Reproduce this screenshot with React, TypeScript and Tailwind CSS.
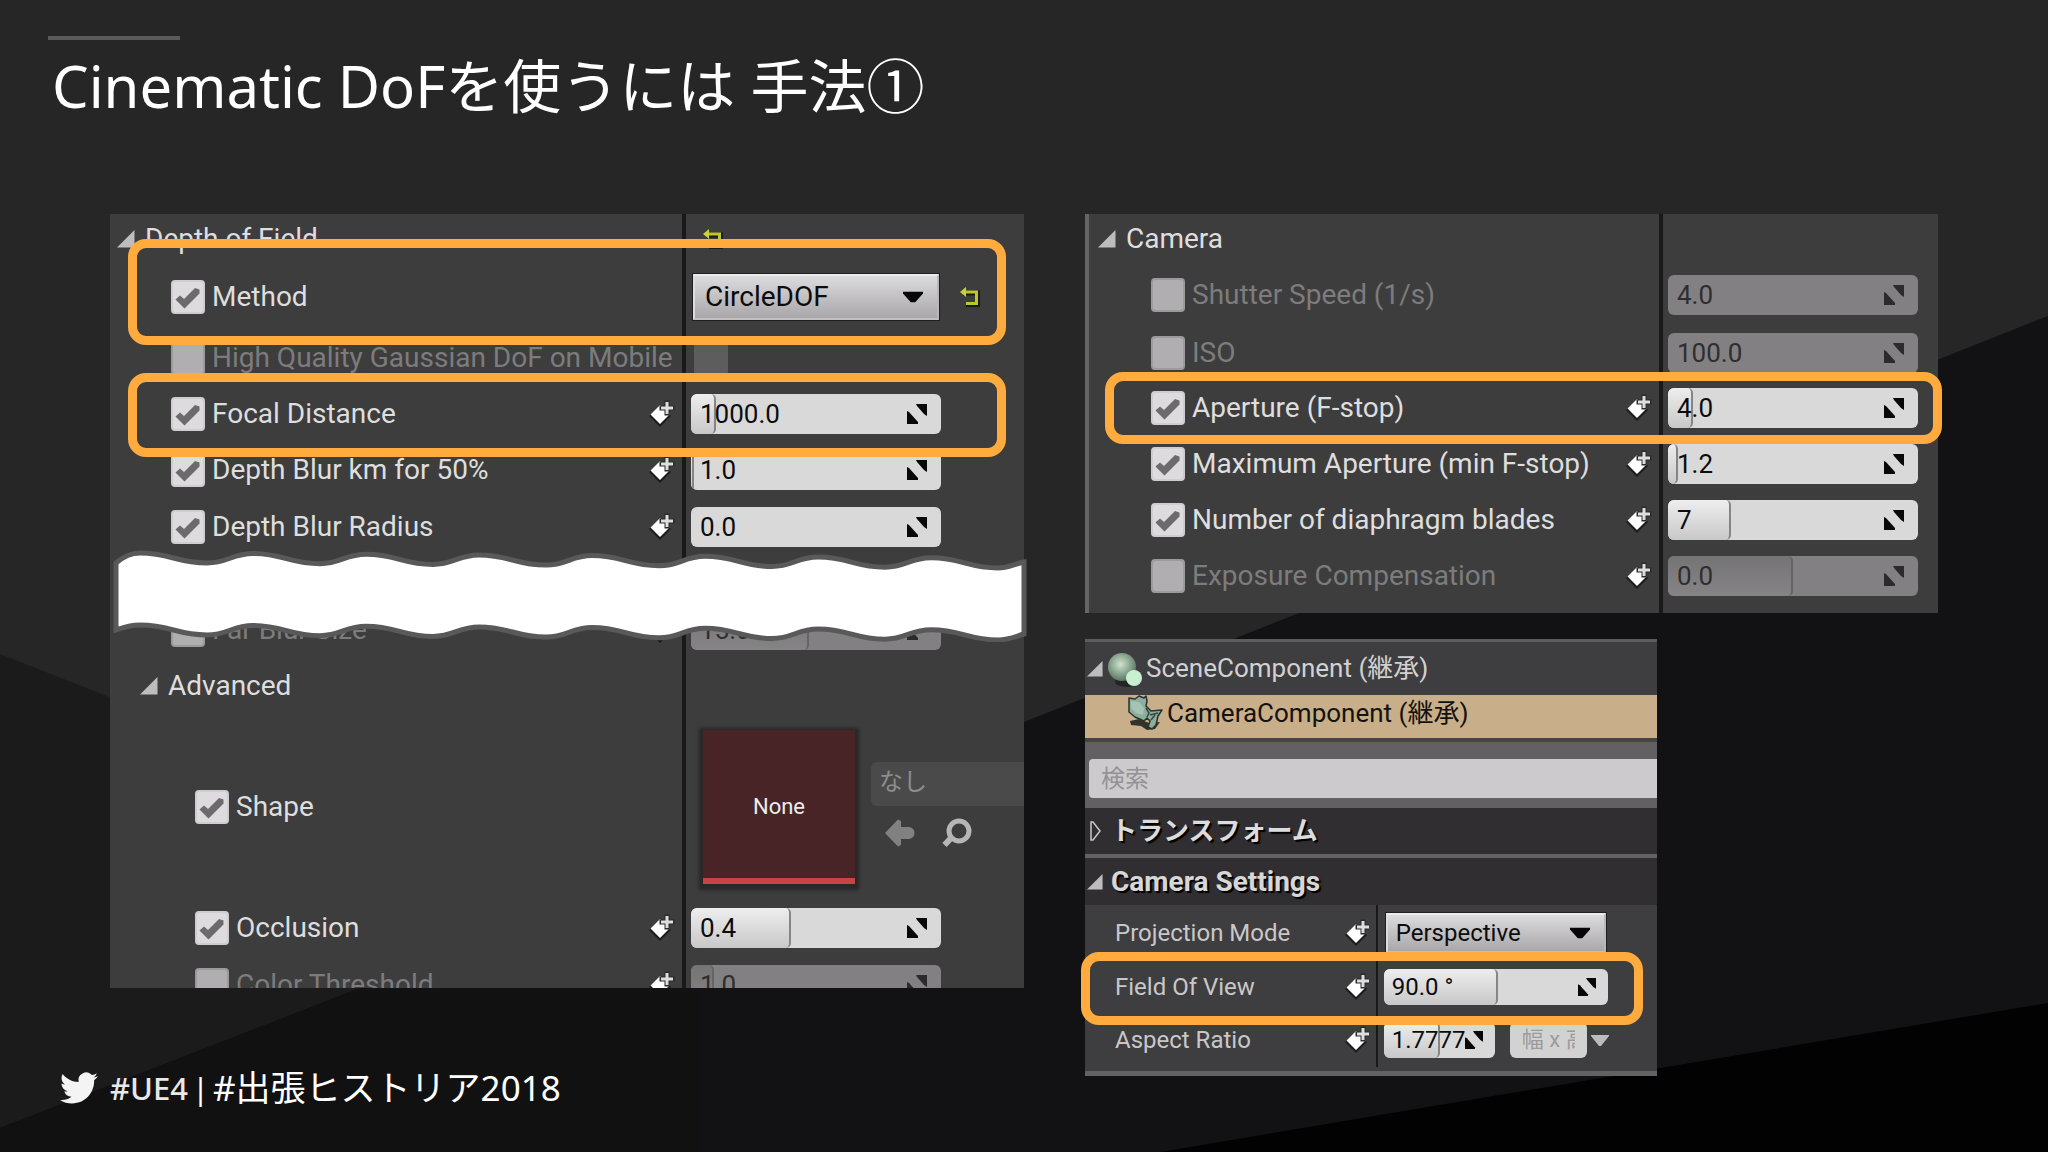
import React, { useId, useState } from "react";
import type { ReactNode } from "react";

const cols = "grid w-full grid-cols-[572fr_4px_338fr] items-stretch";
const camCols = "grid w-full grid-cols-[570fr_4px_275fr] items-stretch";
const compCols = "grid w-full grid-cols-[291fr_2px_279fr] items-stretch";

function Backdrop() {
  return (
    <svg
      className="absolute inset-0 h-full w-full"
      viewBox="0 0 2048 1152"
      preserveAspectRatio="none"
      aria-hidden="true"
    >
      <rect width="2048" height="1152" fill="#262626" />
      <polygon points="0,654 600,890 600,1152 0,1152" fill="#1b1b1b" />
      <polygon points="0,1128 350,992 1024,722 2048,316 2048,1152 0,1152" fill="#121113" />
      <polygon points="0,1128 350,992 700,992 700,1152 0,1152" fill="#111111" />
      <polygon points="1160,1152 2048,1003 2048,1152" fill="#020202" />
    </svg>
  );
}

function KeyIcon({ small = false }: { small?: boolean }) {
  return (
    <svg
      className={small ? "h-7 w-6 shrink-0" : "h-7 w-7 shrink-0"}
      viewBox={small ? "2 0 24 28" : "0 0 28 28"}
      aria-hidden="true"
    >
      <path d="M13 4.5 L24 16 L13 27 L2 16 Z" fill="#1c1c1c" />
      <path d="M13 5 L22.500 14.500 L13 24 L3.500 14.500 Z" fill="#ffffff" />
      <path d="M17.500 0.500h5v5h5v5h-5v5h-5v-5h-5v-5h5z" fill="#2a2a2a" />
      <path d="M18.500 2h3v4.500h4.500v3h-4.500v4.500h-3v-4.500h-4.500v-3h4.500z" fill="#dedede" />
    </svg>
  );
}

function ExpandIcon({ dim = false, small = false }: { dim?: boolean; small?: boolean }) {
  return (
    <svg
      className={small ? "h-[18px] w-[18px] shrink-0" : "h-5 w-5 shrink-0"}
      viewBox="0 0 20 20"
      fill={dim ? "#2c2b2c" : "#080808"}
      aria-hidden="true"
    >
      <path d="M9 0H20V12L17 10L10 2Z" />
      <path d="M0 7L2 8L11 18V20H0Z" />
    </svg>
  );
}

function ResetIcon() {
  return (
    <svg className="h-5 w-5" viewBox="0 0 20 20" aria-hidden="true">
      <path d="M3 6H17.500V18.500H6" fill="none" stroke="#1b1b12" strokeWidth="5" />
      <path d="M3 5H16.500V16.500H6" fill="none" stroke="#b9c92c" strokeWidth="3" />
      <path d="M0 5L6 0V10Z" fill="#c6d636" />
    </svg>
  );
}

function OpenArrow({ small = false }: { small?: boolean }) {
  return (
    <svg
      className={small ? "h-4 w-4 shrink-0" : "h-[18px] w-[18px] shrink-0"}
      viewBox="0 0 18 18"
      aria-hidden="true"
    >
      <path d="M17.500 0V17.500H0Z" fill="#bdbdbd" />
    </svg>
  );
}

function Tick({
  id,
  checked = false,
  faint = false,
  label,
}: {
  id?: string;
  checked?: boolean;
  faint?: boolean;
  label?: string;
}) {
  const [on, setOn] = useState(checked);
  const tone = faint
    ? "bg-[#5d5d5d]"
    : on
      ? "border-2 border-[#cfcdcf] bg-[#dddbdd]"
      : "border-2 border-[#9c9b9c] bg-[#b0aeb0]";
  return (
    <span className="relative inline-flex h-[34px] w-[34px] shrink-0">
      <input
        id={id}
        type="checkbox"
        aria-label={label}
        checked={on}
        onChange={(e) => setOn(e.target.checked)}
        className={`h-full w-full appearance-none rounded-[4px] ${tone}`}
      />
      {on && (
        <svg
          className="pointer-events-none absolute inset-0 h-full w-full"
          viewBox="0 0 34 34"
          aria-hidden="true"
        >
          <path
            d="M4.500 19.500L9 15.500L13 19L24 8L28.500 9.500V13.500L13.500 28.500Z"
            fill="#6c6b6c"
          />
        </svg>
      )}
    </span>
  );
}

function NumberField({
  label,
  value,
  fill = 0,
  dim = false,
  variant = "tall",
}: {
  label: string;
  value: string;
  fill?: number;
  dim?: boolean;
  variant?: "tall" | "short" | "tiny";
}) {
  const size =
    variant === "tall"
      ? "h-10 w-[250px] text-[26px] pr-[14px]"
      : variant === "short"
        ? "h-9 w-[224px] text-[24px] pr-[12px]"
        : "h-9 w-[111px] text-[24px] pr-[12px]";
  return (
    <span
      className={`relative flex items-center overflow-hidden rounded-[6px] ${size} ${
        dim ? "bg-[#828082] text-[#2f2e2f]" : "bg-[#dad9da] text-[#0c0c0c]"
      }`}
    >
      {fill > 0 && (
        <span
          className={`absolute inset-y-0 left-0 rounded-[5px] border-r-2 bg-linear-to-b ${
            dim
              ? "border-[#656465] from-[#757475] to-[#868486]"
              : "border-[#868586] from-[#efeeef] to-[#c9c8c9]"
          }`}
          style={{ width: `${fill}%` }}
        />
      )}
      <input
        type="text"
        aria-label={label}
        defaultValue={value}
        className={`relative h-full min-w-0 flex-1 bg-transparent outline-none ${
          variant === "tall" ? "pl-[9px]" : "pl-2"
        }`}
      />
      <span className={variant === "tiny" ? "absolute right-[12px]" : "relative"}>
        <ExpandIcon dim={dim} small={variant !== "tall"} />
      </span>
    </span>
  );
}

function Dropdown({
  label,
  value,
  small = false,
}: {
  label: string;
  value: string;
  small?: boolean;
}) {
  return (
    <span
      className={`relative inline-flex border border-[#1f1f1f] ${
        small ? "h-[42px] w-[222px] text-[24px]" : "h-12 w-[248px] text-[28px]"
      }`}
    >
      <select
        aria-label={label}
        className={`h-full w-full appearance-none border-2 border-t-[#ececee] border-r-[#b9b8ba] border-b-[#c0bfc1] border-l-[#dddcde] bg-linear-to-b from-[#dcdbdd] to-[#a9a7aa] text-[#0c0c0c] outline-none ${
          small ? "pl-2" : "pl-[10px]"
        }`}
        defaultValue={value}
      >
        <option>{value}</option>
      </select>
      <svg
        className="pointer-events-none absolute top-1/2 right-4 h-[11px] w-5 -translate-y-1/2"
        viewBox="0 0 20 11"
        aria-hidden="true"
      >
        <path d="M0 0H20V2L12 11H8L0 2Z" fill="#060606" />
      </svg>
    </span>
  );
}

function NameCell({
  label,
  checked,
  dim = false,
  keyed = false,
  indent,
}: {
  label: string;
  checked: boolean;
  dim?: boolean;
  keyed?: boolean;
  indent: string;
}) {
  const id = useId();
  return (
    <div className={`flex min-w-0 items-center pr-[7px] ${indent}`}>
      <Tick id={id} checked={checked} />
      <label
        htmlFor={id}
        className={`pl-[7px] text-[28px] leading-8 whitespace-nowrap ${
          dim ? "text-[#7d7c7d]" : "text-[#dededf]"
        }`}
      >
        {label}
      </label>
      {keyed && (
        <span className="ml-auto flex">
          <KeyIcon />
        </span>
      )}
    </div>
  );
}

function Divider() {
  return <div className="bg-[#1a191a]" />;
}

function Row({
  grid,
  height,
  name,
  children,
}: {
  grid: string;
  height: string;
  name: ReactNode;
  children?: ReactNode;
}) {
  return (
    <div className={`${grid} ${height}`}>
      {name}
      <Divider />
      <div className="flex min-w-0 items-center pl-[5px]">{children}</div>
    </div>
  );
}

function Highlight({ place }: { place: string }) {
  return (
    <div
      className={`pointer-events-none absolute z-20 rounded-[18px] border-[9px] border-[#ffab3e] ${place}`}
    />
  );
}

function wavePath() {
  let top = "M6 17";
  let x = 30;
  let y = 7;
  top += ` C14 10 22 ${y} ${x} ${y}`;
  const points: [number, number][] = [[30, 7]];
  for (let k = 0; k < 8; k++) {
    points.push([97 + 113 * k, 17 + k * 0.7]);
    if (k < 7) points.push([143 + 113 * k, 7.5 + k * 0.7]);
  }
  for (let i = 1; i < points.length; i++) {
    const [nx, ny] = points[i];
    const bend = (nx - x) * 0.45;
    top += ` C${x + bend} ${y} ${nx - bend} ${ny} ${nx} ${ny}`;
    x = nx;
    y = ny;
  }
  top += ` C${x + 10} ${y} ${x + 16} 18 914 16 L914 88 C904 91 898 94 ${x} ${y + 72}`;
  for (let i = points.length - 2; i >= 0; i--) {
    const [nx, ny] = points[i];
    const bend = (x - nx) * 0.45;
    top += ` C${x - bend} ${y + 72} ${nx + bend} ${ny + 72} ${nx} ${ny + 72}`;
    x = nx;
    y = ny;
  }
  return `${top} C22 79 14 81 6 84 Z`;
}

function TornStrip() {
  return (
    <div className="relative z-10 h-[46px]">
      <div className={`${cols} h-full`}>
        <div />
        <Divider />
        <div />
      </div>
      <svg
        className="absolute -top-[10px] left-0 h-24 w-[calc(100%+4px)]"
        viewBox="0 0 918 96"
        preserveAspectRatio="none"
        aria-hidden="true"
      >
        <path d={wavePath()} fill="#ffffff" stroke="#595959" strokeWidth="5" />
      </svg>
    </div>
  );
}

function DepthOfFieldPanel() {
  return (
    <section className="relative bg-[#3d3d3d]">
      <Row
        grid={cols}
        height="h-[50px]"
        name={
          <div className="flex items-center gap-[10px] pl-[7px]">
            <OpenArrow />
            <h2 className="text-[28px] leading-8 text-[#dededf]">Depth of Field</h2>
          </div>
        }
      >
        <button type="button" aria-label="Reset Depth of Field" className="ml-3">
          <ResetIcon />
        </button>
      </Row>
      <Row
        grid={cols}
        height="h-[66px]"
        name={<NameCell label="Method" checked indent="pl-[61px]" />}
      >
        <span className="flex pl-px">
          <Dropdown label="Method value" value="CircleDOF" />
        </span>
        <button type="button" aria-label="Reset Method" className="ml-5">
          <ResetIcon />
        </button>
      </Row>
      <Row
        grid={cols}
        height="h-14"
        name={
          <NameCell
            label="High Quality Gaussian DoF on Mobile"
            checked={false}
            dim
            indent="pl-[61px]"
          />
        }
      >
        <span className="flex pl-[3px]">
          <Tick faint label="High Quality Gaussian DoF on Mobile value" />
        </span>
      </Row>
      <Row
        grid={cols}
        height="h-14"
        name={<NameCell label="Focal Distance" checked keyed indent="pl-[61px]" />}
      >
        <NumberField label="Focal Distance value" value="1000.0" fill={10} />
      </Row>
      <Row
        grid={cols}
        height="h-14"
        name={<NameCell label="Depth Blur km for 50%" checked keyed indent="pl-[61px]" />}
      >
        <NumberField label="Depth Blur km for 50% value" value="1.0" fill={1} />
      </Row>
      <Row
        grid={cols}
        height="h-[58px]"
        name={<NameCell label="Depth Blur Radius" checked keyed indent="pl-[61px]" />}
      >
        <NumberField label="Depth Blur Radius value" value="0.0" />
      </Row>
      <TornStrip />
      <Row
        grid={cols}
        height="h-14"
        name={<NameCell label="Far Blur Size" checked={false} dim keyed indent="pl-[61px]" />}
      >
        <NumberField label="Far Blur Size value" value="15.0" fill={47} dim />
      </Row>
      <Row
        grid={cols}
        height="h-[56px]"
        name={
          <div className="flex items-center gap-[10px] pl-[30px]">
            <OpenArrow />
            <h3 className="text-[28px] leading-8 text-[#dededf]">Advanced</h3>
          </div>
        }
      />
      <Row
        grid={cols}
        height="h-[186px]"
        name={<NameCell label="Shape" checked indent="pl-[85px]" />}
      >
        <button
          type="button"
          className="ml-3 flex h-[154px] w-[152px] shrink-0 items-center justify-center border-b-[6px] border-[#c94345] bg-[#482426] pt-1 text-[22px] text-[#ececec] shadow-[0_2px_3px_4px_#292727]"
        >
          None
        </button>
        <div className="ml-4 flex min-w-0 flex-1 flex-col gap-3 pb-1">
          <button
            type="button"
            className="h-11 w-full rounded-l-[6px] bg-[#4a4a4a] pb-1 pl-2 text-left text-[24px] text-[#8e8e8e]"
          >
            なし
          </button>
          <div className="flex items-center gap-[27px] pl-[14px]">
            <button type="button" aria-label="Use selected asset">
              <svg className="h-[30px] w-[30px]" viewBox="0 0 30 30" aria-hidden="true">
                <path
                  d="M0 15L13 1.500L16 3V9H24Q29.500 10 29.500 15Q29.500 20 24 21H16V27L13 28.500Z"
                  fill="#818181"
                />
              </svg>
            </button>
            <button type="button" aria-label="Find in content browser">
              <svg className="h-[30px] w-[30px]" viewBox="0 0 30 30" aria-hidden="true">
                <circle cx="17" cy="13" r="10" fill="none" stroke="#b6b6b6" strokeWidth="5" />
                <path d="M10 19L2.500 27" stroke="#b6b6b6" strokeWidth="6" />
              </svg>
            </button>
          </div>
        </div>
      </Row>
      <Row
        grid={cols}
        height="h-14"
        name={<NameCell label="Occlusion" checked keyed indent="pl-[85px]" />}
      >
        <NumberField label="Occlusion value" value="0.4" fill={40} />
      </Row>
      <div className="h-8 overflow-hidden">
        <Row
          grid={cols}
          height="h-[58px]"
          name={
            <NameCell label="Color Threshold" checked={false} dim keyed indent="pl-[85px]" />
          }
        >
          <NumberField label="Color Threshold value" value="1.0" fill={9} dim />
        </Row>
      </div>
      <Highlight place="top-[25px] right-[18px] left-[18px] h-[106px]" />
      <Highlight place="top-[159px] right-[18px] left-[18px] h-[84px]" />
    </section>
  );
}

const cameraRows = [
  { label: "Shutter Speed (1/s)", value: "4.0", on: false, keyed: false, fill: 0, height: "h-[62px]" },
  { label: "ISO", value: "100.0", on: false, keyed: false, fill: 0, height: "h-[54px]" },
  { label: "Aperture (F-stop)", value: "4.0", on: true, keyed: true, fill: 10, height: "h-14" },
  { label: "Maximum Aperture (min F-stop)", value: "1.2", on: true, keyed: true, fill: 4, height: "h-14" },
  { label: "Number of diaphragm blades", value: "7", on: true, keyed: true, fill: 25, height: "h-14" },
  { label: "Exposure Compensation", value: "0.0", on: false, keyed: true, fill: 50, height: "h-14" },
];

function CameraPanel() {
  return (
    <section className="relative border-l-4 border-[#666566] bg-[#3e3d3e]">
      <Row
        grid={camCols}
        height="h-[50px]"
        name={
          <div className="flex items-center gap-[10px] pl-[9px]">
            <OpenArrow />
            <h2 className="text-[28px] leading-8 text-[#dededf]">Camera</h2>
          </div>
        }
      />
      {cameraRows.map((r) => (
        <Row
          key={r.label}
          grid={camCols}
          height={r.height}
          name={
            <NameCell
              label={r.label}
              checked={r.on}
              dim={!r.on}
              keyed={r.keyed}
              indent="pl-[62px]"
            />
          }
        >
          <NumberField label={`${r.label} value`} value={r.value} fill={r.fill} dim={!r.on} />
        </Row>
      ))}
      <Row grid={camCols} height="h-[9px]" name={<div />} />
      <Highlight place="top-[158px] -right-1 left-4 h-[72px]" />
    </section>
  );
}

function SphereIcon() {
  return (
    <svg className="h-[38px] w-9 shrink-0" viewBox="0 0 36 38" aria-hidden="true">
      <defs>
        <radialGradient id="sphere" cx="0.45" cy="0.4" r="0.6">
          <stop offset="0" stopColor="#cfe3cf" />
          <stop offset="0.5" stopColor="#93ae98" />
          <stop offset="1" stopColor="#5b7562" />
        </radialGradient>
      </defs>
      <ellipse cx="20" cy="32" rx="12" ry="5" fill="#222524" />
      <circle cx="15" cy="17" r="14" fill="url(#sphere)" />
      <circle cx="27" cy="28" r="8" fill="#c9efd3" />
    </svg>
  );
}

function CameraIcon() {
  return (
    <svg className="h-9 w-9 shrink-0" viewBox="0 0 36 36" aria-hidden="true">
      <path d="M3 26L12 24L22 28L33 27L28 34L20 35L14 31L4 30Z" fill="#33332a" />
      <path
        d="M2 3L8 4L12 1L17 3L19 1L20 6L19 11L24 16L35 15L31 21L29 30L25 34L21 32L23 26L20 23L17 26L8 22L2 17Z"
        fill="#8dae9f"
        stroke="#26342d"
        strokeWidth="1.500"
        strokeLinejoin="round"
      />
      <path d="M4 6L12 7L17 13L16 20L9 18L4 13Z" fill="#a5c4b6" />
      <path d="M19 13L22 18L20 22M23 20L31 18M24 25L28 20" fill="none" stroke="#33463c" strokeWidth="1.500" />
    </svg>
  );
}

function CompRow({
  label,
  height,
  children,
}: {
  label: string;
  height: string;
  children: ReactNode;
}) {
  return (
    <div className={`${compCols} ${height}`}>
      <div className="flex min-w-0 items-center justify-between pr-[7px] pl-[30px] text-[24px] leading-7 whitespace-nowrap text-[#c9c8c9]">
        {label}
        <KeyIcon small />
      </div>
      <Divider />
      <div className="flex min-w-0 items-center pl-[6px]">{children}</div>
    </div>
  );
}

function ComponentPanel() {
  return (
    <section className="relative w-[67%] border-t-[3px] border-b-[5px] border-t-[#5e5d5e] border-b-[#626163] bg-[#3e3d3f]">
      <div className="flex h-[53px] items-center pl-[2px] text-[26px] whitespace-nowrap text-[#d2d1d2]">
        <OpenArrow small />
        <span className="flex pl-1">
          <SphereIcon />
        </span>
        <span className="pl-[3px]">SceneComponent (継承)</span>
      </div>
      <div className="flex h-[43px] items-start bg-[#c8ae89] pl-[42px] text-[26px] leading-9 whitespace-nowrap text-[#14120f]">
        <CameraIcon />
        <span className="pl-1">CameraComponent (継承)</span>
      </div>
      <div className="border-t-4 border-[#454443] bg-[#626063] pt-[17px] pb-[10px] pl-1">
        <input
          type="search"
          aria-label="検索"
          placeholder="検索"
          className="block h-[39px] w-full rounded-l-[4px] bg-[#cdcacd] pl-3 text-[24px] outline-none placeholder:text-[#949294]"
        />
      </div>
      <button
        type="button"
        className="flex h-[46px] w-full items-center gap-[10px] bg-[#302e30] pl-[5px] text-left text-[26px] font-bold text-[#dddcdd] [text-shadow:2px_2px_1px_#000]"
      >
        <svg className="h-5 w-[11px]" viewBox="0 0 11 20" aria-hidden="true">
          <path d="M1 1H3L10 10L3 19H1Z" fill="none" stroke="#c9c8c9" strokeWidth="1.500" />
        </svg>
        トランスフォーム
      </button>
      <button
        type="button"
        className="flex h-[51px] w-full items-center gap-2 border-t-4 border-[#626163] bg-[#302e30] pl-[2px] text-left text-[28px] font-bold text-[#d8d7d8] [text-shadow:2px_2px_1px_#000]"
      >
        <OpenArrow small />
        Camera Settings
      </button>
      <CompRow label="Projection Mode" height="h-[56px]">
        <span className="flex pl-px">
          <Dropdown label="Projection Mode" value="Perspective" small />
        </span>
      </CompRow>
      <CompRow label="Field Of View" height="h-[52px]">
        <NumberField label="Field Of View" value="90.0 °" fill={51} variant="short" />
      </CompRow>
      <CompRow label="Aspect Ratio" height="h-[54px]">
        <NumberField label="Aspect Ratio" value="1.7777" fill={51} variant="tiny" />
        <button
          type="button"
          className="ml-[15px] flex h-9 w-[77px] overflow-hidden rounded-[6px] bg-[#d3d2d3] px-[12px] text-[22px] leading-9 text-[#9c9b9c]"
        >
          <span className="w-[56px] overflow-hidden text-left whitespace-nowrap">幅 x 高さ</span>
        </button>
        <svg className="ml-1 h-[11px] w-[18px]" viewBox="0 0 18 11" aria-hidden="true">
          <path d="M0 0H18V1L10 11H8L0 1Z" fill="#bdbcbd" />
        </svg>
      </CompRow>
      <div className="h-1" />
      <Highlight place="top-[310px] right-[14px] -left-1 h-[73px]" />
    </section>
  );
}

export default function App() {
  return (
    <div className="relative min-h-screen overflow-hidden bg-[#262626] font-[Roboto,'Noto_Sans_CJK_JP',sans-serif]">
      <Backdrop />
      <div className="relative">
        <header className="h-[214px] pt-9 pl-12">
          <div className="h-1 w-[132px] bg-[#5a5a5a]" />
          <h1 className="pt-[10px] pl-1 font-['Noto_Sans','Noto_Sans_CJK_JP',sans-serif] text-[58px] leading-[72px] font-normal whitespace-nowrap text-white">
            Cinematic DoFを使うには 手法①
          </h1>
        </header>
        <main className="grid grid-cols-2">
          <div>
            <div className="pl-[110px]">
              <DepthOfFieldPanel />
            </div>
            <footer className="flex items-center pt-[76px] pl-[60px] font-['Noto_Sans','Noto_Sans_CJK_JP',sans-serif] leading-[48px] whitespace-nowrap text-white">
              <svg className="h-[38px] w-[38px]" viewBox="0 0 24 24" fill="#f4f4f4" aria-hidden="true">
                <path d="M23.953 4.570a10 10 0 01-2.825.775 4.958 4.958 0 002.163-2.723c-.951.555-2.005.959-3.127 1.184a4.920 4.920 0 00-8.384 4.482C7.690 8.095 4.067 6.130 1.640 3.162a4.822 4.822 0 00-.666 2.475c0 1.710.870 3.213 2.188 4.096a4.904 4.904 0 01-2.228-.616v.060a4.923 4.923 0 003.946 4.827 4.996 4.996 0 01-2.212.085 4.936 4.936 0 004.604 3.417 9.867 9.867 0 01-6.102 2.105c-.390 0-.779-.023-1.170-.067a13.995 13.995 0 007.557 2.209c9.053 0 13.998-7.496 13.998-13.985 0-.210 0-.420-.015-.630A9.935 9.935 0 0024 4.590z" />
              </svg>
              <span className="pl-3 text-[31px] font-medium text-[#e8e8e8]">#UE4</span>
              <span className="pl-1 text-[31px]">|</span>
              <span className="pl-1 text-[35px]">#出張ヒストリア2018</span>
            </footer>
          </div>
          <div className="flex flex-col gap-[26px] pr-[110px] pl-[61px]">
            <CameraPanel />
            <ComponentPanel />
          </div>
        </main>
      </div>
    </div>
  );
}
